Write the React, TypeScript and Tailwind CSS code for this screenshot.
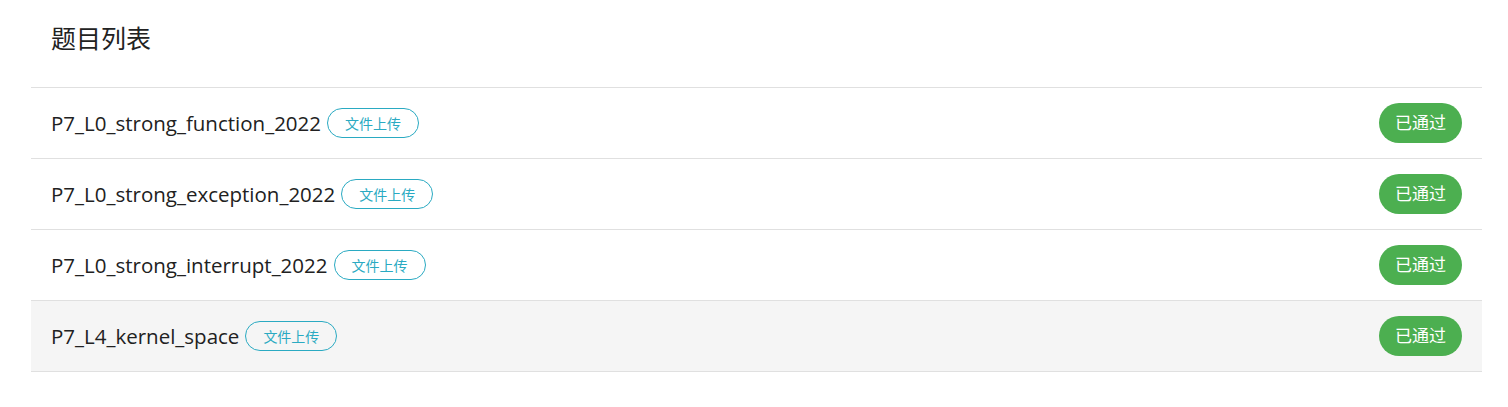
const problems = [
  { name: 'P7_L0_strong_function_2022' },
  { name: 'P7_L0_strong_exception_2022' },
  { name: 'P7_L0_strong_interrupt_2022' },
  { name: 'P7_L4_kernel_space', hover: true },
];

export default function App() {
  return (
    <div
      className="min-h-[407px] bg-white px-[31px] pt-[22px]"
      style={{ fontFamily: '"Open Sans", "Noto Sans CJK SC", sans-serif' }}
    >
      <h2 className="px-5 text-[25px] leading-[32px] text-[#222] h-[65px]">题目列表</h2>
      <div className="w-[1451px] border-t border-[#e0e0e0]">
        {problems.map((p) => (
          <div
            key={p.name}
            className={`flex h-[71px] items-center justify-between border-b border-[#e0e0e0] px-5 ${p.hover ? 'bg-[#f5f5f5]' : ''}`}
          >
            <div className="flex items-center gap-[6px]">
              <span className="text-[20.5px] text-[#212121]">{p.name}</span>
              <span className="flex h-[30px] items-center rounded-full border border-[#2aaac2] px-[17px] text-[14px] text-[#2aaac2]">
                文件上传
              </span>
            </div>
            <span className="flex h-[40px] items-center rounded-full bg-[#4caf50] px-[16px] text-[17px] text-white">
              已通过
            </span>
          </div>
        ))}
      </div>
    </div>
  );
}
